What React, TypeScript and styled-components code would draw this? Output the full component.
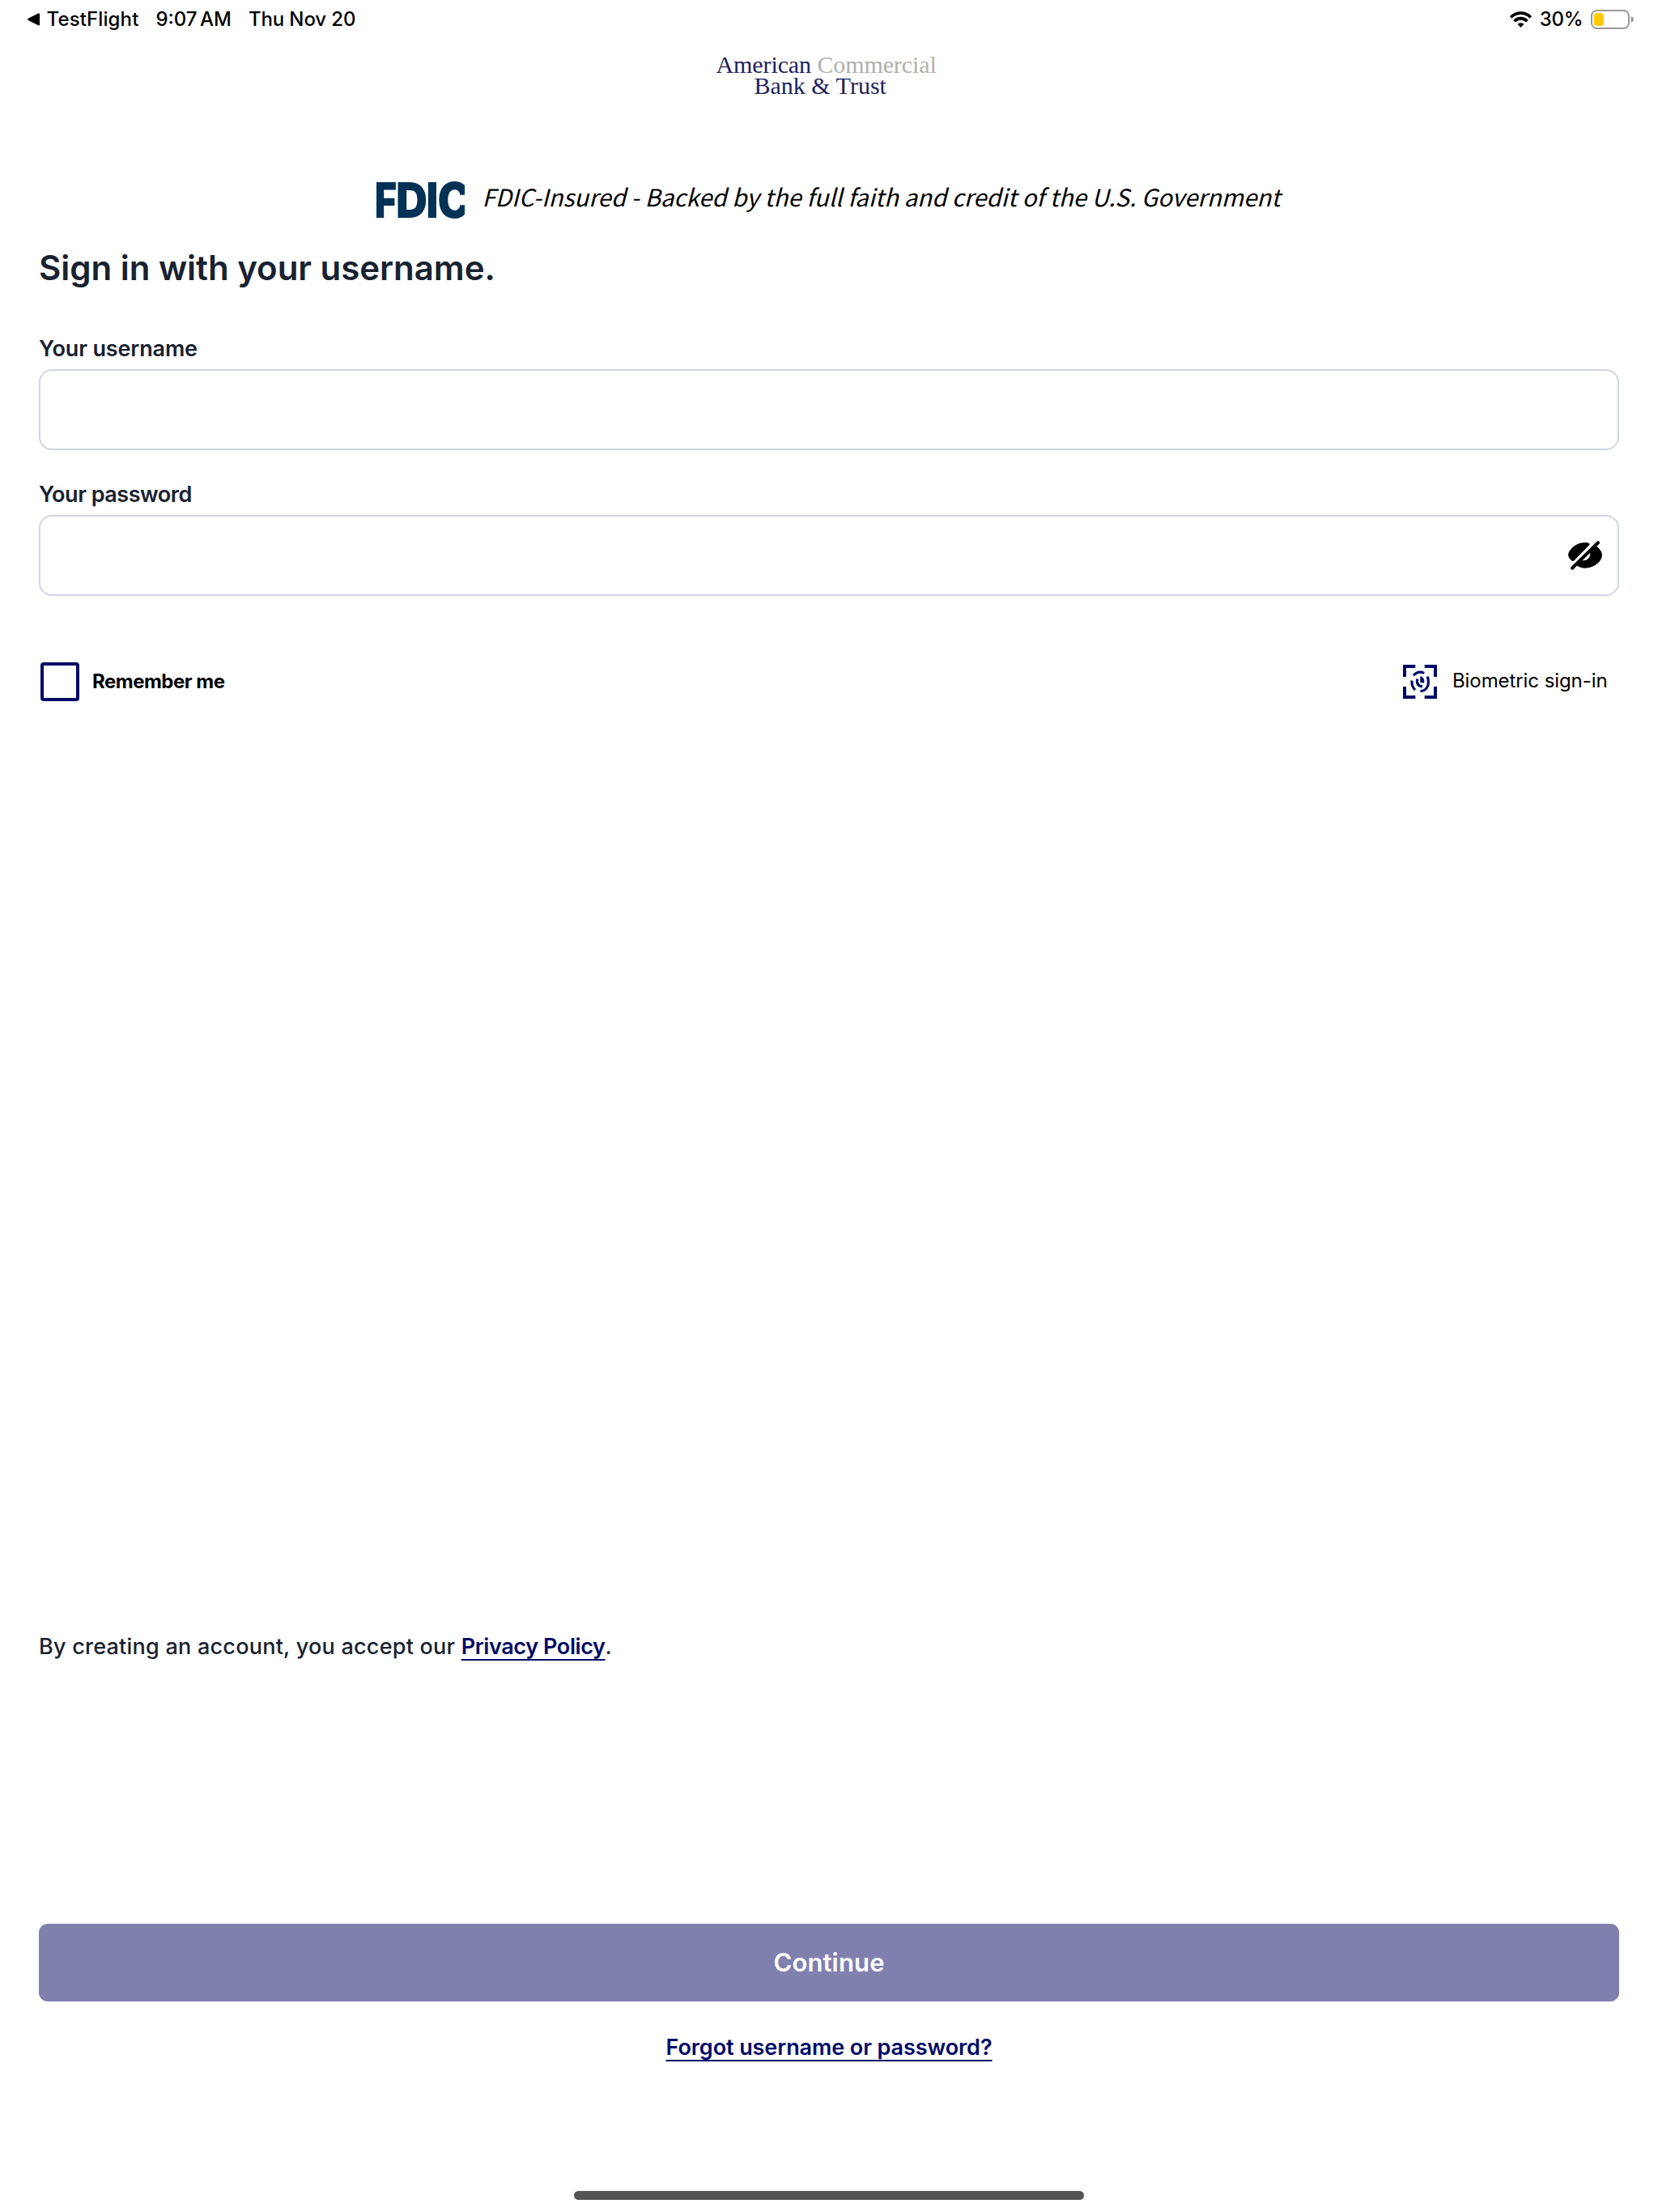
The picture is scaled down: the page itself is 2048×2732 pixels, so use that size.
import React, {useState} from 'react';
import styled, {createGlobalStyle} from 'styled-components';

const NAVY = '#000b66';
const INK = '#182230';

const App = () => {
  const [username, setUsername] = useState('');
  const [password, setPassword] = useState('');
  const [remember, setRemember] = useState(false);

  return (
    <Screen>
      <GlobalStyle />
      <StatusBar>
        <StatusGroup>
          <BackIcon />
          <StatusText spacing={0.12}>TestFlight</StatusText>
          <Time spacing={0}>9:07 AM</Time>
          <StatusText spacing={-0.12}>Thu Nov 20</StatusText>
        </StatusGroup>
        <StatusRight>
          <WifiIcon />
          <StatusText spacing={-0.2}>30%</StatusText>
          <BatteryIcon />
        </StatusRight>
      </StatusBar>

      <Brand>
        <div>
          American <BrandMuted>Commercial</BrandMuted>
        </div>
        <BrandSecond>Bank &amp; Trust</BrandSecond>
      </Brand>

      <Fdic>
        <FdicLogo />
        <Tagline>
          FDIC-Insured - Backed by the full faith and credit of the U.S.
          Government
        </Tagline>
      </Fdic>

      <Form>
        <Title>Sign in with your username.</Title>
        <Field>
          <Label htmlFor="username" spacing={-0.14}>
            Your username
          </Label>
          <InputBox>
            <Input
              id="username"
              value={username}
              onChange={e => setUsername(e.target.value)}
            />
          </InputBox>
        </Field>
        <Field>
          <Label htmlFor="password" spacing={-0.48}>
            Your password
          </Label>
          <InputBox>
            <Input
              id="password"
              type="password"
              value={password}
              onChange={e => setPassword(e.target.value)}
            />
            <EyeOffIcon />
          </InputBox>
        </Field>
        <Options>
          <Remember>
            <Checkbox
              type="checkbox"
              checked={remember}
              onChange={e => setRemember(e.target.checked)}
            />
            <RememberText>Remember me</RememberText>
          </Remember>
          <Biometric>
            <BiometricIcon />
            <BiometricText>Biometric sign-in</BiometricText>
          </Biometric>
        </Options>
      </Form>

      <Footer>
        <Terms>
          By creating an account, you accept our{' '}
          <PolicyLink href="#">Privacy Policy</PolicyLink>.
        </Terms>
        <Button>Continue</Button>
        <Forgot>
          <Link href="#">Forgot username or password?</Link>
        </Forgot>
      </Footer>
      <HomeIndicator />
    </Screen>
  );
};

const BackIcon = () => (
  <svg width="15" height="16" viewBox="0 0 15 16">
    <path d="M13.2 .6C14.2 .1 15 .6 15 1.6V14.2C15 15.3 14.2 15.7 13.2 15.2L.9 9C-.2 8.4-.2 7.4.9 6.8Z" />
  </svg>
);

const WifiIcon = () => (
  <svg width="27" height="20" viewBox="0 0 27 20">
    <g fill="none" stroke="#000" strokeWidth="3.8">
      <path d="M1.2 7.4A17.2 17.2 0 0 1 25.8 7.4" />
      <path d="M5.6 12.2A10.8 10.8 0 0 1 21.4 12.2" />
    </g>
    <path d="M9.5 15.8A5.8 5.8 0 0 1 17.5 15.8L13.5 20Z" />
  </svg>
);

const BatteryIcon = () => (
  <svg width="53" height="24" viewBox="0 0 53 24">
    <rect x="1" y="1" width="46" height="22" rx="6.5" fill="none" stroke="#999" strokeWidth="2" />
    <rect x="4" y="4" width="12" height="16" rx="3.5" fill="#ffcc00" />
    <path d="M49.6 8C51.8 8.8 52.8 10.2 52.8 12S51.8 15.2 49.6 16Z" fill="#999" />
  </svg>
);

// each letter of the mark has its own left edge and width
const FDIC_LETTERS = [
  {char: 'F', x: -2.3, scale: 0.78},
  {char: 'D', x: 23.9, scale: 0.9},
  {char: 'I', x: 61.5, scale: 0.85},
  {char: 'C', x: 75.5, scale: 0.9},
];

const FdicLogo = () => (
  <svg width="109" height="48" viewBox="0 0 109 48">
    <g
      fill="#003256"
      fontFamily="Inter, sans-serif"
      fontSize="60"
      fontWeight="900">
      {FDIC_LETTERS.map(({char, x, scale}) => (
        <text key={char} transform={`translate(${x} 45.5) scale(${scale} 1)`}>
          {char}
        </text>
      ))}
    </g>
  </svg>
);

const EyeOffIcon = () => (
  <svg width="44" height="38" viewBox="0 0 44 38">
    <path d="M27 6.3L8.5 25.2Q7 26.7 5.3 25.4C0 21 0 16 4 12C9 5 18 2.2 25 3.2Q28.5 3.8 27 6.3Z" />
    <path
      fillRule="evenodd"
      d="M35 7C40 10.5 43.3 15 42.9 19C42.5 27 32 34.7 22 34.7C18 34.7 14.5 33.5 11.5 31ZM18 25L28.2 15.4C29 21 25 26.2 18 25Z"
    />
    <path d="M6 34.7L38 3.2" stroke="#000" strokeWidth="4" strokeLinecap="round" />
  </svg>
);

const BiometricIcon = () => (
  <svg width="42" height="42" viewBox="0 0 42 42" fill="none" stroke={NAVY}>
    <path
      strokeWidth="4"
      d="M15.3 2H2V15M26.7 2H40V15M2 27V40H15.3M40 27V40H26.7"
    />
    <g strokeWidth="3.2">
      <path d="M13 13.3C16.5 9.2 21.5 8.3 26.2 10.4" />
      <path d="M11 19.5C10.6 24 11.8 28 15 31.2" />
      <path d="M30.2 14.5C33 23 31 32 21.5 32.6" />
      <path d="M17.8 17.5C16.6 23 18.6 26.4 24 26.8" />
      <path d="M22.6 14.5V22M22.6 16.4C25 17 25.4 19 24.8 22.4" strokeWidth="2.6" />
    </g>
  </svg>
);

const GlobalStyle = createGlobalStyle`
  * {
    box-sizing: border-box;
  }

  body {
    margin: 0;
    background: #fff;
    font-family: Inter, 'Liberation Sans', sans-serif;
  }

  svg {
    display: block;
    flex: none;
  }
`;

const Screen = styled.div`
  display: flex;
  flex-direction: column;
  height: 2732px;
  overflow: hidden;
`;

const StatusBar = styled.div`
  display: flex;
  justify-content: space-between;
  height: 48px;
  padding: 0 30px 0 34px;
`;

const StatusGroup = styled.div`
  display: flex;
  align-items: center;
  gap: 21px;

  svg {
    margin-right: -12.5px;
  }
`;

const StatusRight = styled.div`
  display: flex;
  align-items: center;
  gap: 9.5px;
`;

const StatusText = styled.span<{spacing: number}>`
  font-size: 24px;
  font-weight: 500;
  line-height: 48px;
  letter-spacing: ${({spacing}) => spacing}px;
`;

const Time = styled(StatusText)`
  word-spacing: -3px;
`;

const Brand = styled.div`
  margin-top: 19px;
  padding-left: 884.5px;
  color: #1f1f5c;
  font-family: 'Liberation Serif', serif;
  font-size: 30px;
  line-height: 26px;
  letter-spacing: -0.1px;
`;

const BrandMuted = styled.span`
  color: #b1b1ab;
`;

const BrandSecond = styled.div`
  padding-left: 47px;
  letter-spacing: 0;
`;

const Fdic = styled.div`
  display: flex;
  justify-content: center;
  gap: 22px;
  margin-top: 104px;
  padding-right: 2px;
`;

const Tagline = styled.span`
  font-family: 'Noto Sans CJK JP', sans-serif;
  font-size: 29.4px;
  font-style: italic;
  line-height: 39px;
  letter-spacing: 0.04px;
  white-space: nowrap;
`;

const Form = styled.div`
  display: flex;
  flex-direction: column;
  padding: 0 48px;
`;

const Title = styled.h1`
  margin: 34px 0 19px;
  color: ${INK};
  font-size: 42px;
  font-weight: 600;
  line-height: 52px;
  letter-spacing: -0.03px;
`;

const Field = styled.div`
  margin: 38px 0 0;
`;

const Label = styled.label<{spacing: number}>`
  display: block;
  margin-bottom: 8px;
  color: ${INK};
  font-size: 27px;
  font-weight: 600;
  line-height: 34px;
  letter-spacing: ${({spacing}) => spacing}px;
`;

const InputBox = styled.div`
  display: flex;
  align-items: center;
  height: 100px;
  padding: 0 18px;
  border: 2px solid #d0d5e2;
  border-radius: 16px;
`;

const Input = styled.input`
  flex: 1;
  height: 90px;
  padding: 0;
  border: none;
  outline: none;
  background: none;
  font: inherit;
  font-size: 28px;
`;

const Options = styled.div`
  display: flex;
  justify-content: space-between;
  align-items: center;
  height: 48px;
  margin-top: 82px;
  padding: 0 14.5px 0 2px;
`;

const Remember = styled.label`
  display: flex;
  align-items: center;
  gap: 16px;
`;

const RememberText = styled.span`
  padding-bottom: 1px;
  font-size: 24px;
  font-weight: 700;
  letter-spacing: -0.5px;
`;

const Checkbox = styled.input`
  width: 48px;
  height: 48px;
  margin: 0;
  appearance: none;
  border: 4px solid ${NAVY};
  border-radius: 4px;

  &:checked {
    background: ${NAVY};
  }
`;

const Biometric = styled.div`
  display: flex;
  align-items: center;
  gap: 18.5px;
`;

const BiometricText = styled.span`
  padding-bottom: 3px;
  font-size: 24px;
  letter-spacing: -0.08px;
`;

const Footer = styled.div`
  margin-top: auto;
  padding: 0 48px;
`;

const Link = styled.a`
  color: ${NAVY};
  font-weight: 600;
  letter-spacing: -0.08px;
  text-decoration: underline;
  text-decoration-thickness: 2px;
  text-decoration-skip-ink: none;
  text-underline-offset: 6px;
`;

const PolicyLink = styled(Link)`
  letter-spacing: -0.4px;
`;

const Terms = styled.p`
  margin: 0 0 325px;
  color: ${INK};
  font-size: 27px;
  font-weight: 500;
  line-height: 34px;
  letter-spacing: 0.24px;
`;

const Button = styled.button`
  display: block;
  width: 100%;
  height: 96px;
  padding: 0 0 2px;
  border: none;
  border-radius: 11px;
  background: #8080ae;
  color: #fff;
  font-family: inherit;
  font-size: 31px;
  font-weight: 600;
  letter-spacing: 0.15px;
`;

const Forgot = styled.div`
  margin-top: 40px;
  font-size: 27px;
  line-height: 34px;
  text-align: center;
`;

const HomeIndicator = styled.div`
  flex: none;
  width: 630px;
  height: 11px;
  margin: 160px auto 15px;
  border-radius: 6px;
  background: #545454;
`;

export default App;
